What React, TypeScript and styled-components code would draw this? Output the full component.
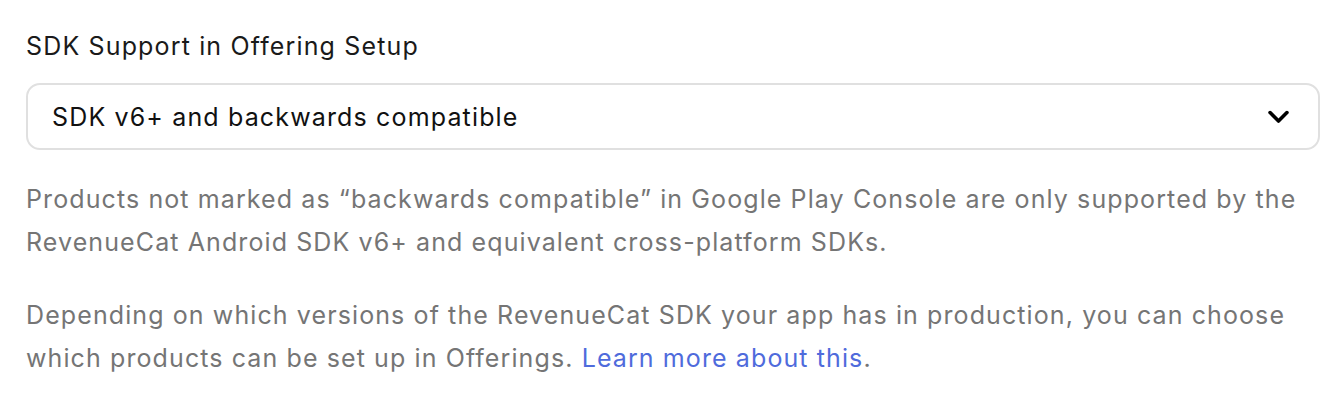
import React from "react";
import styled, { createGlobalStyle } from "styled-components";

const GlobalStyle = createGlobalStyle`
  body {
    margin: 0;
    background: #fff;
    font-family: Inter, "Noto Sans", sans-serif;
    -webkit-font-smoothing: antialiased;
  }
`;

export const Section = styled.div`
  display: flex;
  flex-direction: column;
  width: 1294px;
  padding: 30px 0 0 26px;
`;

export const Label = styled.label`
  font-size: 25px;
  line-height: 32px;
  letter-spacing: 1.15px;
  color: #1a1a1a;
  margin-bottom: 21px;
`;

export const SelectBox = styled.div`
  display: flex;
  align-items: center;
  justify-content: space-between;
  height: 67px;
  box-sizing: border-box;
  padding: 0 26px 0 24px;
  border: 2px solid #e0e0e0;
  border-radius: 14px;
  font-size: 25px;
  letter-spacing: 1.15px;
  color: #111;
  svg {
    width: 27px;
    height: 27px;
  }
`;

export const Help = styled.p<{ gap?: number }>`
  margin: ${(props) => props.gap ?? 0}px 0 0;
  font-size: 25px;
  line-height: 43px;
  letter-spacing: 1.1px;
  color: #757575;
  a {
    color: #4f6bdc;
    text-decoration: none;
  }
`;

const Chevron = () => (
  <svg viewBox="0 0 24 24" fill="none" stroke="#000" strokeWidth={3.2} strokeLinecap="round" strokeLinejoin="round">
    <path d="M4.5 8.5l7.5 7.5 7.5-7.5" />
  </svg>
);

const App = () => {
  return (
    <>
      <GlobalStyle />
      <Section>
        <Label>SDK Support in Offering Setup</Label>
        <SelectBox>
          <span>SDK v6+ and backwards compatible</span>
          <Chevron />
        </SelectBox>
        <Help gap={28}>
          Products not marked as “backwards compatible” in Google Play Console are only supported by the
          RevenueCat Android SDK v6+ and equivalent cross-platform SDKs.
        </Help>
        <Help gap={30}>
          Depending on which versions of the RevenueCat SDK your app has in production, you can choose which
          products can be set up in Offerings. <a href="#">Learn more about this</a>.
        </Help>
      </Section>
    </>
  );
};

export default App;
